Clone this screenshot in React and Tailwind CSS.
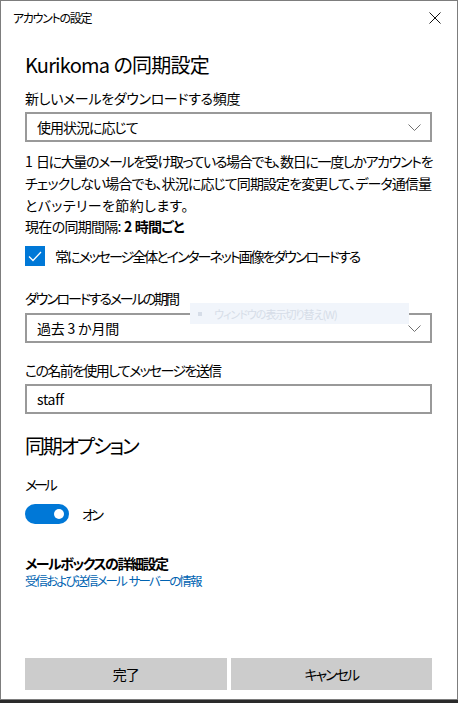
import React from "react";

function Chevron() {
  return (
    <svg width="13" height="7" viewBox="0 0 13 7" fill="none" className="shrink-0">
      <path d="M0.5 0.5l6 6 6-6" stroke="#707070" strokeWidth="1" />
    </svg>
  );
}

function Select({ children }) {
  return (
    <div className="flex h-[30px] w-[407px] items-center justify-between border-2 border-[#999999] pl-[10px] pr-[9px]">
      {children}
      <Chevron />
    </div>
  );
}

export default function App() {
  return (
    <div className="h-[703px] w-[458px] bg-[#2a2a2a] font-['Noto_Sans_CJK_JP',sans-serif] text-black [font-feature-settings:'palt']">
      <div className="relative flex h-[700px] flex-col border border-[#7d7d7d] bg-white">
        {/* タイトルバー */}
        <div className="flex h-[33px] items-center justify-between pl-[12px] pr-[16px]">
          <span className="text-[12px] leading-[16px] tracking-[-1.3px]">アカウントの設定</span>
          <svg width="12" height="12" viewBox="0 0 12 12" fill="none">
            <path d="M0.5 0.5l11 11M11.5 0.5l-11 11" stroke="#111" strokeWidth="1" />
          </svg>
        </div>

        <div className="flex flex-1 flex-col pl-[24px]">
          <h1 className="mt-[17px] text-[20px] leading-[28px] font-normal tracking-[-0.8px]">
            Kurikoma<span className="tracking-normal"> </span>の同期設定
          </h1>

          <div className="mt-[9px] text-[14px] leading-[20px] tracking-[-0.33px]">新しいメールをダウンロードする頻度</div>
          <div className="mt-[4px]">
            <Select>
              <span className="text-[14px] leading-[20px] tracking-[-1px]">使用状況に応じて</span>
            </Select>
          </div>

          <p className="mt-[8px] text-[14px] leading-[22px] whitespace-nowrap">
            <span className="tracking-normal">1 </span>
            <span className="tracking-[-1.35px]">日に大量のメールを受け取っている場合でも、数日に一度しかアカウントを</span>
            <br />
            <span className="tracking-[-0.9px]">チェックしない場合でも、状況に応じて同期設定を変更して、データ通信量</span>
            <br />
            <span className="tracking-[0.4px]">とバッテリーを節約します。</span>
          </p>
          <div className="text-[14px] leading-[20px] tracking-[-0.7px]">
            現在の同期間隔:<span className="tracking-normal"> </span>
            <span className="font-bold">
              2<span className="tracking-normal"> </span>時間ごと
            </span>
          </div>

          <div className="mt-[10px] flex items-center gap-[10px]">
            <div className="flex h-[20px] w-[20px] items-center justify-center bg-[#0078d7]">
              <svg width="14" height="11" viewBox="0 0 14 11" fill="none">
                <path d="M1 5.5l4 4 8-8.5" stroke="#fff" strokeWidth="1.3" />
              </svg>
            </div>
            <span className="text-[14px] leading-[20px] tracking-[-2px]">常にメッセージ全体とインターネット画像をダウンロードする</span>
          </div>

          <div className="mt-[22px] text-[14px] leading-[20px] tracking-[-2.1px]">ダウンロードするメールの期間</div>
          <div className="mt-[5px]">
            <Select>
              <span className="text-[14px] leading-[20px] tracking-[-0.2px]">過去 3 か月間</span>
            </Select>
          </div>

          <div className="mt-[17px] text-[14px] leading-[20px] tracking-[-1.65px]">この名前を使用してメッセージを送信</div>
          <div className="mt-[4px] flex h-[30px] w-[407px] items-center border-2 border-[#999999] pl-[10px]">
            <span className="text-[14px] leading-[20px] tracking-[-0.3px]">staff</span>
          </div>

          <h2 className="mt-[18px] text-[20px] leading-[28px] font-normal tracking-[-2.2px]">同期オプション</h2>

          <div className="mt-[14px] text-[14px] leading-[20px] tracking-[-3.2px]">メール</div>
          <div className="mt-[10px] flex items-center gap-[13px]">
            <div className="flex h-[20px] w-[44px] items-center justify-end rounded-full bg-[#0078d7] pr-[5px]">
              <div className="h-[10px] w-[10px] rounded-full bg-white" />
            </div>
            <span className="text-[14px] leading-[20px] tracking-[-3.4px]">オン</span>
          </div>

          <div className="mt-[30px] text-[14px] leading-[18px] font-bold tracking-[-1.5px]">メールボックスの詳細設定</div>
          <div className="mt-[1px] text-[12.5px] leading-[16px] text-[#0063b1] tracking-[-1.9px]">
            受信および送信メール<span className="tracking-normal"> </span>サーバーの情報
          </div>

          <div className="mt-auto mb-[9px] grid w-[407px] grid-cols-2 gap-[4px]">
            <button className="h-[32px] bg-[#cccccc] text-[14px] leading-[20px] tracking-[-1px]">完了</button>
            <button className="h-[32px] bg-[#cccccc] text-[14px] leading-[20px] tracking-[-2px]">キャンセル</button>
          </div>
        </div>

        {/* 薄く重なったツールチップの残像 */}
        <div className="absolute left-[189px] top-[302px] flex h-[21px] w-[219px] items-center gap-[12px] bg-[#f1f5fb] pl-[8px] text-[11px] leading-[14px] text-[#d6dde8] tracking-[-1px]">
          <span className="h-[4px] w-[4px] bg-[#d6dde8]" />
          <span>ウィンドウの表示切り替え(W)</span>
        </div>
      </div>
    </div>
  );
}
